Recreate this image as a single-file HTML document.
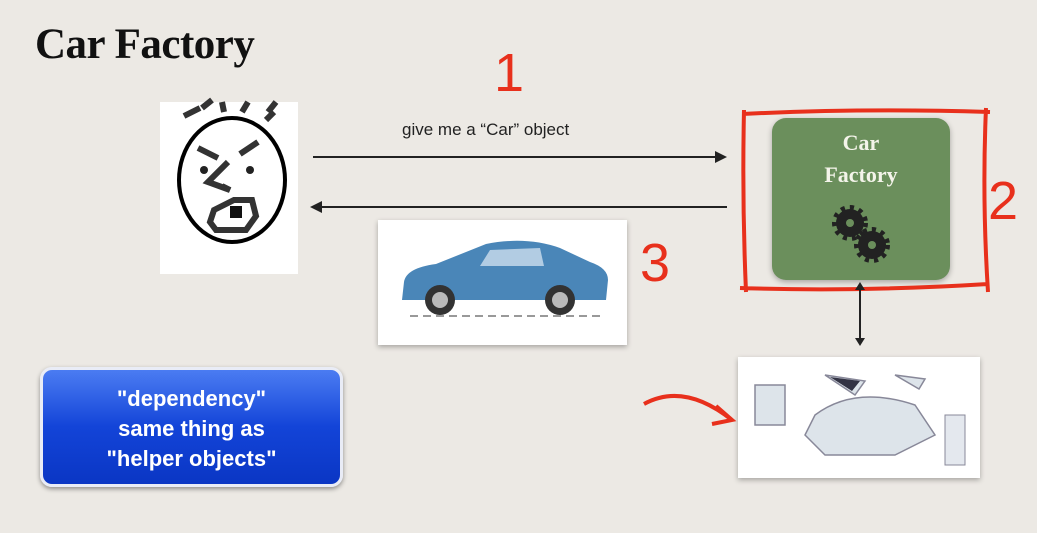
<!DOCTYPE html>
<html><head><style>
body{margin:0;width:1037px;height:533px;background:#ece9e4;position:relative;overflow:hidden;font-family:"Liberation Sans",sans-serif}
.a{position:absolute}
</style></head><body>
<div class="a" style="left:35px;top:20px;font:bold 43px 'Liberation Serif',serif;color:#111;letter-spacing:-0.5px">Car Factory</div>
<div class="a" style="left:494px;top:42px;font:54px 'Liberation Sans';color:#e8301c">1</div>
<div class="a" style="left:160px;top:102px;width:138px;height:172px;background:#fff"></div>
<svg class="a" style="left:150px;top:90px" width="160" height="190">
<g stroke="#333" stroke-width="6" fill="none">
<path d="M34 26l16 -8M52 18l10 -8M72 12l2 10M98 12l-6 10M126 12l-8 10M124 22l-8 8M48 58l20 10M108 52l-18 12M78 72l-20 20l22 8l-8 -4M64 120l20 -10l18 0l4 16l-10 14l-30 0l-6 -8z"/>
</g>
<ellipse cx="82" cy="90" rx="53" ry="62" stroke="#000" stroke-width="4" fill="none"/>
<circle cx="54" cy="80" r="4" fill="#222"/><circle cx="100" cy="80" r="4" fill="#222"/>
<rect x="80" y="116" width="12" height="12" fill="#111"/>
</svg>
<div class="a" style="left:402px;top:120px;font-size:17px;color:#222">give me a “Car” object</div>
<svg class="a" style="left:300px;top:140px" width="440" height="80">
<line x1="13" y1="17" x2="420" y2="17" stroke="#222" stroke-width="2"/><path d="M427 17l-12 -6v12z" fill="#222"/>
<line x1="20" y1="67" x2="427" y2="67" stroke="#222" stroke-width="2"/><path d="M10 67l12 -6v12z" fill="#222"/>
</svg>
<div class="a" style="left:378px;top:220px;width:249px;height:125px;background:#fff;box-shadow:0 2px 5px rgba(0,0,0,.3)"></div>
<svg class="a" style="left:400px;top:238px" width="210" height="84">
<path d="M4 44q2-14 32-18l50-20q40-8 74 4l30 14q18 6 18 18l-2 20h-204z" fill="#4a86b8"/>
<path d="M90 12l50-2l4 18h-64z" fill="#cde" opacity=".8"/>
<circle cx="40" cy="62" r="15" fill="#333"/><circle cx="40" cy="62" r="8" fill="#bbb"/>
<circle cx="160" cy="62" r="15" fill="#333"/><circle cx="160" cy="62" r="8" fill="#bbb"/>
<line x1="10" y1="78" x2="200" y2="78" stroke="#999" stroke-width="2" stroke-dasharray="8 5"/>
</svg>
<div class="a" style="left:640px;top:232px;font:54px 'Liberation Sans';color:#e8301c">3</div>
<div class="a" style="left:772px;top:118px;width:178px;height:162px;background:#6b8f5c;border-radius:14px;box-shadow:0 2px 6px rgba(0,0,0,.3)"></div>
<div class="a" style="left:772px;top:127px;width:178px;text-align:center;font:bold 22px/32px 'Liberation Serif',serif;color:#f4f4ea">Car<br>Factory</div>
<svg class="a" style="left:830px;top:203px" width="60" height="62">
<g fill="#222"><circle cx="20" cy="20" r="14"/><circle cx="42" cy="42" r="14"/></g>
<g stroke="#222" stroke-width="6" stroke-dasharray="4 4.8"><circle cx="20" cy="20" r="15" fill="none"/><circle cx="42" cy="42" r="15" fill="none"/></g>
<circle cx="20" cy="20" r="4" fill="#6b8f5c"/><circle cx="42" cy="42" r="4" fill="#6b8f5c"/>
</svg>
<svg class="a" style="left:730px;top:100px" width="307" height="200">
<path d="M12 14q120 -6 248 -2M14 10q-2 90 2 182M10 188q120 4 248 -4M256 8q-4 90 2 184" stroke="#e8301c" stroke-width="4" fill="none"/>
</svg>
<div class="a" style="left:988px;top:170px;font:54px 'Liberation Sans';color:#e8301c">2</div>
<svg class="a" style="left:850px;top:282px" width="20" height="66"><line x1="10" y1="6" x2="10" y2="58" stroke="#222" stroke-width="2"/><path d="M10 0l-5 8h10zM10 64l-5 -8h10z" fill="#222"/></svg>
<div class="a" style="left:738px;top:357px;width:242px;height:121px;background:#fff;box-shadow:0 2px 5px rgba(0,0,0,.3)"></div>
<svg class="a" style="left:745px;top:365px" width="230" height="105">
<path d="M10 20h30v40h-30zM80 10l40 6l-10 14zM150 10l30 4l-6 10zM70 50q40 -30 100 -10l20 30l-40 20h-70l-20 -20z" fill="#dde4ea" stroke="#889" stroke-width="1.5"/>
<path d="M85 12l30 4l-8 10z" fill="#334"/><path d="M200 50h20v50h-20z" fill="#e4e8ee" stroke="#889"/>
</svg>
<svg class="a" style="left:636px;top:380px" width="105" height="50"><path d="M8 24q40 -22 88 16M80 26l16 14l-20 4" stroke="#e8301c" stroke-width="4" fill="none"/></svg>
<div class="a" style="left:40px;top:367px;width:303px;height:120px;border-radius:12px;background:linear-gradient(#4b7cf2,#1344d8 50%,#0a36c4);border:3px solid #e9ecf6;box-sizing:border-box;box-shadow:0 2px 5px rgba(0,0,0,.4);color:#fff;font:bold 22px/30px 'Liberation Sans';text-align:center;padding-top:14px">"dependency"<br>same thing as<br>"helper objects"</div>
</body></html>
